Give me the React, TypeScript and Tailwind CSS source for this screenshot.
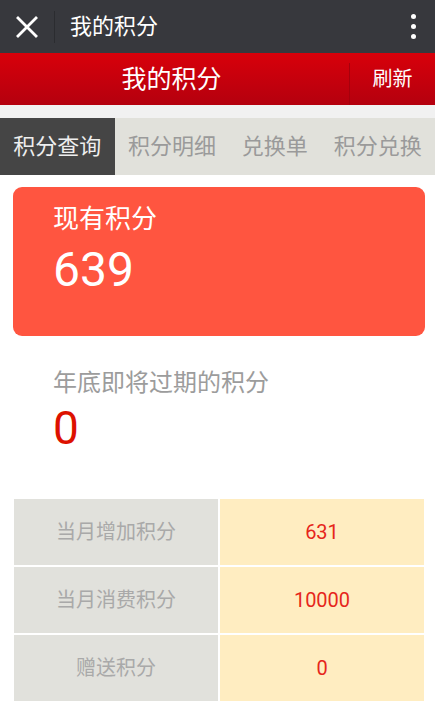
import React from "react";

const tabs = ["积分查询", "积分明细", "兑换单", "积分兑换"];
const rows = [
  ["当月增加积分", "631"],
  ["当月消费积分", "10000"],
  ["赠送积分", "0"],
];

export default function App() {
  return (
    <div className="w-[435px] h-[710px] overflow-hidden bg-white font-['Roboto','Noto_Sans_CJK_SC',sans-serif]">
      {/* top bar */}
      <div className="h-[53px] bg-[#37383d] flex items-center">
        <div className="w-[54px] h-[53px] flex items-center justify-center">
          <svg width="22" height="22" viewBox="0 0 22 22">
            <path d="M2 2 L20 20 M20 2 L2 20" stroke="#fff" strokeWidth="2.8" strokeLinecap="square" />
          </svg>
        </div>
        <div className="w-px h-[32px] bg-[#2b2c30]" />
        <div className="pl-[15px] text-[22px] text-white leading-none">我的积分</div>
        <div className="ml-auto mr-[19px] flex flex-col gap-[5px]">
          <span className="block w-[5px] h-[5px] rounded-full bg-white" />
          <span className="block w-[5px] h-[5px] rounded-full bg-white" />
          <span className="block w-[5px] h-[5px] rounded-full bg-white" />
        </div>
      </div>
      {/* red bar */}
      <div className="h-[52px] flex bg-gradient-to-b from-[#d8000a] to-[#b4000e]">
        <div className="flex-1 flex items-center justify-center text-[25px] text-white leading-none pt-[1px] pr-[6px]">我的积分</div>
        <div className="w-px mt-[10px] bg-[#a6000c]" />
        <div className="w-[85px] flex items-center justify-center text-[20px] text-white leading-none">刷新</div>
      </div>
      <div className="h-[13px] bg-[#f1f1f1]" />
      {/* tabs */}
      <div className="h-[57px] flex bg-[#e1e1db]">
        {tabs.map((t, i) => (
          <div
            key={t}
            className={
              i === 0
                ? "w-[115px] flex items-center justify-center text-[22px] leading-none bg-[#454545] text-[#eeeeee]"
                : i === 2
                ? "w-[91px] flex items-center justify-center text-[22px] leading-none text-[#9a9a9a]"
                : "w-[115px] flex items-center justify-center text-[22px] leading-none text-[#9a9a9a]"
            }
          >
            {t}
          </div>
        ))}
      </div>
      {/* card */}
      <div className="mt-[12px] ml-[13px] w-[412px] h-[149px] rounded-[9px] bg-[#ff5540] pl-[40px] pt-[16px] flex flex-col">
        <div className="text-[26px] leading-[32px] text-white">现有积分</div>
        <div className="text-[48px] leading-[48px] text-white mt-[11px]">639</div>
      </div>
      {/* expiring */}
      <div className="pl-[53px] pt-[32px] flex flex-col">
        <div className="text-[24px] leading-[30px] text-[#9c9c9c]">年底即将过期的积分</div>
        <div className="text-[46px] leading-[46px] text-[#dd1100] mt-[7px]">0</div>
      </div>
      {/* table */}
      <div className="mt-[46px] ml-[12px] w-[414px] p-[2px] grid grid-cols-2 gap-[2px] bg-white">
        {rows.map(([k, v]) => (
          <React.Fragment key={k}>
            <div className="h-[66px] bg-[#e1e1dc] flex items-center justify-center text-[20px] text-[#a9a9a9]">{k}</div>
            <div className="h-[66px] bg-[#ffedc1] flex items-center justify-center text-[20px] text-[#e6261b]">{v}</div>
          </React.Fragment>
        ))}
      </div>
    </div>
  );
}
